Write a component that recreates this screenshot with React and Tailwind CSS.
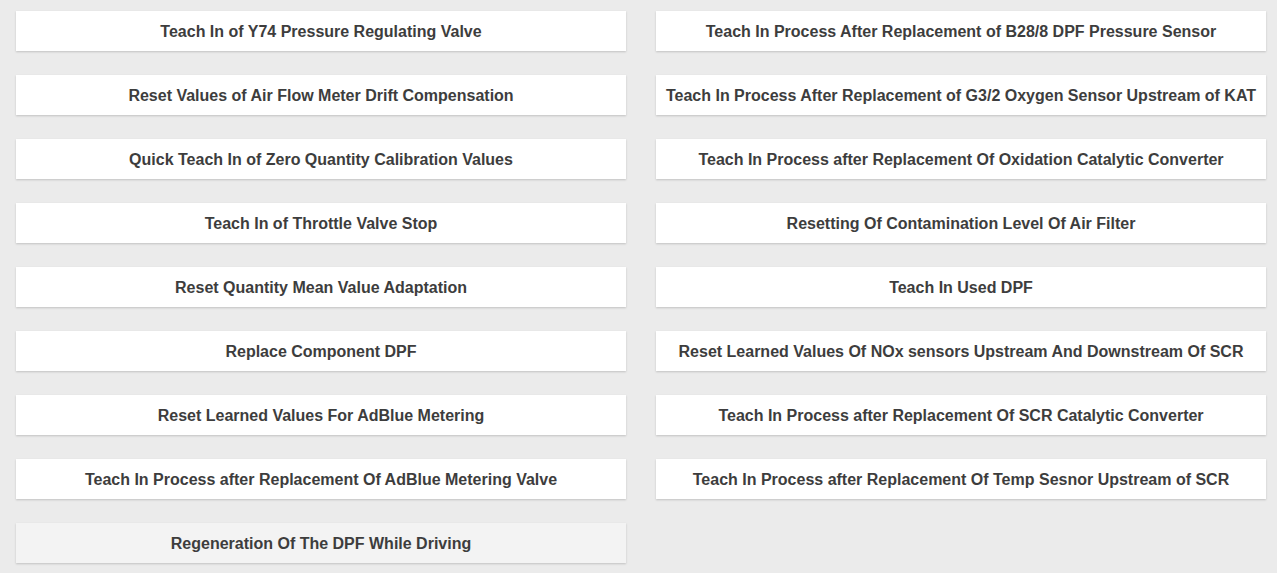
import React from "react";

const left = [
  "Teach In of Y74 Pressure Regulating Valve",
  "Reset Values of Air Flow Meter Drift Compensation",
  "Quick Teach In of Zero Quantity Calibration Values",
  "Teach In of Throttle Valve Stop",
  "Reset Quantity Mean Value Adaptation",
  "Replace Component DPF",
  "Reset Learned Values For AdBlue Metering",
  "Teach In Process after Replacement Of AdBlue Metering Valve",
  "Regeneration Of The DPF While Driving",
];
const right = [
  "Teach In Process After Replacement of B28/8 DPF Pressure Sensor",
  "Teach In Process After Replacement of G3/2 Oxygen Sensor Upstream of KAT",
  "Teach In Process after Replacement Of Oxidation Catalytic Converter",
  "Resetting Of Contamination Level Of Air Filter",
  "Teach In Used DPF",
  "Reset Learned Values Of NOx sensors Upstream And Downstream Of SCR",
  "Teach In Process after Replacement Of SCR Catalytic Converter",
  "Teach In Process after Replacement Of Temp Sesnor Upstream of SCR",
];

function Btn({ label, dim }) {
  return (
    <div
      className={`h-[40px] pt-[2px] flex items-center justify-center text-[16px] font-bold text-[#3d3d3d] shadow-[0_1px_2px_rgba(0,0,0,0.18)] ${
        dim ? "bg-[#f3f3f3]" : "bg-white"
      }`}
    >
      {label}
    </div>
  );
}

export default function App() {
  return (
    <div
      className="w-[1277px] h-[573px] bg-[#ebebeb] pl-4 pr-[11px] pt-[11px] grid grid-cols-2 gap-x-[30px] items-start overflow-hidden"
      style={{ fontFamily: '"Liberation Sans", Arial, sans-serif' }}
    >
      <div className="flex flex-col gap-[24px]">
        {left.map((l, i) => (
          <Btn key={l} label={l} dim={i === left.length - 1} />
        ))}
      </div>
      <div className="flex flex-col gap-[24px]">
        {right.map((l) => (
          <Btn key={l} label={l} />
        ))}
      </div>
    </div>
  );
}
